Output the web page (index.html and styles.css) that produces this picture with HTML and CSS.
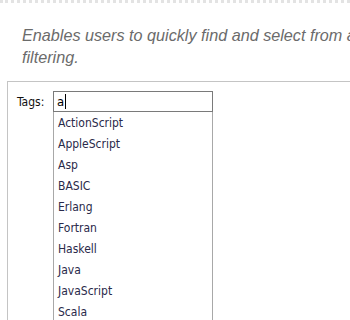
FILE: index.html
```html
<!DOCTYPE html>
<html lang="en">
<head>
    <meta charset="UTF-8">
    <title>Autocomplete</title>
    <link rel="stylesheet" href="styles.css">
</head>
<body>
    <div class="top-rule"></div>
    <p class="intro">Enables users to quickly find and select from a pre-populated list of values as they type, leveraging searching and<br>filtering.</p>
    <div class="demo">
        <div class="field">
            <label for="tags">Tags:</label>
            <div class="combo">
                <div class="input" id="tags">a<span class="caret"></span></div>
                <ul class="suggestions">
                    <li>ActionScript</li>
                    <li>AppleScript</li>
                    <li>Asp</li>
                    <li>BASIC</li>
                    <li>Erlang</li>
                    <li>Fortran</li>
                    <li>Haskell</li>
                    <li>Java</li>
                    <li>JavaScript</li>
                    <li>Scala</li>
                </ul>
            </div>
        </div>
    </div>
</body>
</html>
```
FILE: styles.css
```css
html, body {
    margin: 0;
    padding: 0;
    background-color: #fff;
    overflow: hidden;
    height: 320px;
}

.top-rule {
    height: 3px;
    border-top: 3px dotted #e3e3e3;
}

.intro {
    margin: 0;
    padding: 18px 0 0 22px;
    width: 900px;
    font-family: "Liberation Sans", Arial, sans-serif;
    font-style: italic;
    font-size: 16.2px;
    line-height: 22px;
    color: #6b6b6b;
}

.demo {
    margin: 13px 0 0 7px;
    border-top: 1px solid #c4c4c4;
    border-left: 1px solid #c4c4c4;
    padding: 9px 0 0 9px;
    height: 400px;
}

.field {
    display: flex;
    align-items: flex-start;
    font-family: "DejaVu Sans Condensed", "DejaVu Sans", sans-serif;
    font-size: 12px;
    color: #111;
}

.field label {
    padding-top: 4px;
    width: 36px;
}

.combo {
    width: 160px;
}

.input {
    height: 19px;
    border: 1px solid #7a7a7a;
    padding-left: 3px;
    font-size: 13px;
    line-height: 19px;
    color: #000;
}

.caret {
    display: inline-block;
    width: 1px;
    height: 15px;
    background-color: #000;
    vertical-align: -3px;
    margin-left: 1px;
}

.suggestions {
    list-style: none;
    margin: 0;
    padding: 1px 0 0 0;
    border-left: 1px solid #a8a8a8;
    border-right: 1px solid #a8a8a8;
}

.suggestions li {
    height: 21px;
    line-height: 21px;
    padding-left: 4px;
    color: #2a2a4a;
}
```
